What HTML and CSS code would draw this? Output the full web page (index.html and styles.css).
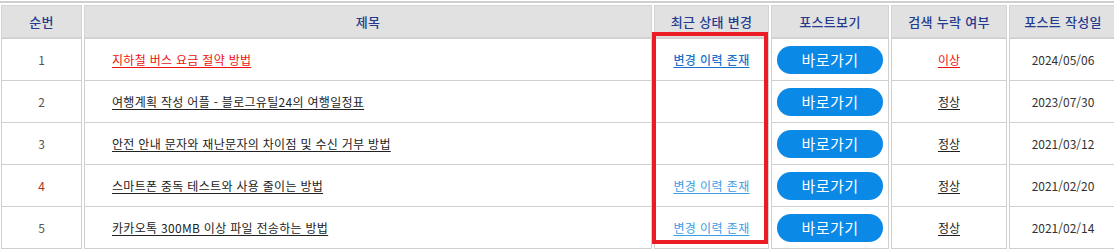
FILE: index.html
```html
<!DOCTYPE html>
<html lang="ko">
<head>
<meta charset="utf-8">
<link rel="stylesheet" href="styles.css">
</head>
<body>
<div class="wrap">
  <table class="posts">
    <colgroup>
      <col class="c-no"><col class="c-title"><col class="c-change"><col class="c-view"><col class="c-search"><col class="c-date">
    </colgroup>
    <thead>
      <tr>
        <th>순번</th><th>제목</th><th>최근 상태 변경</th><th>포스트보기</th><th>검색 누락 여부</th><th>포스트 작성일</th>
      </tr>
    </thead>
    <tbody>
      <tr>
        <td class="no">1</td>
        <td class="title"><a class="red">지하철 버스 요금 절약 방법</a></td>
        <td><a class="hist strong">변경 이력 존재</a></td>
        <td><span class="btn">바로가기</span></td>
        <td><a class="red">이상</a></td>
        <td class="date">2024/05/06</td>
      </tr>
      <tr>
        <td class="no">2</td>
        <td class="title"><a>여행계획 작성 어플 - 블로그유틸24의 여행일정표</a></td>
        <td></td>
        <td><span class="btn">바로가기</span></td>
        <td><a>정상</a></td>
        <td class="date">2023/07/30</td>
      </tr>
      <tr>
        <td class="no">3</td>
        <td class="title"><a>안전 안내 문자와 재난문자의 차이점 및 수신 거부 방법</a></td>
        <td></td>
        <td><span class="btn">바로가기</span></td>
        <td><a>정상</a></td>
        <td class="date">2021/03/12</td>
      </tr>
      <tr>
        <td class="no hl">4</td>
        <td class="title"><a>스마트폰 중독 테스트와 사용 줄이는 방법</a></td>
        <td><a class="hist">변경 이력 존재</a></td>
        <td><span class="btn">바로가기</span></td>
        <td><a>정상</a></td>
        <td class="date">2021/02/20</td>
      </tr>
      <tr>
        <td class="no">5</td>
        <td class="title"><a>카카오톡 300MB 이상 파일 전송하는 방법</a></td>
        <td><a class="hist">변경 이력 존재</a></td>
        <td><span class="btn">바로가기</span></td>
        <td><a>정상</a></td>
        <td class="date">2021/02/14</td>
      </tr>
    </tbody>
  </table>
  <div class="mark"></div>
</div>
</body>
</html>
```

FILE: styles.css
```css
html, body {
  margin: 0;
  padding: 0;
  background: #fff;
}
body {
  font-family: "Noto Sans CJK KR", "Noto Sans", sans-serif;
  font-size: 12px;
  color: #333;
}
.wrap {
  position: relative;
  padding-top: 1px;
  width: 1114px;
  overflow: hidden;
}
.posts {
  table-layout: fixed;
  width: 1118px;
  margin-left: -1px;
  border-collapse: separate;
  border-spacing: 2px 0;
  border-top: 2px solid #cfcfcf;
  padding-top: 2px;
}
.c-no { width: 81px; }
.c-title { width: 568px; }
.c-change { width: 115px; }
.c-view { width: 118px; }
.c-search { width: 116px; }
.c-date { width: 108px; }

.posts th, .posts td {
  box-sizing: border-box;
  border: 1px solid #cfcfcf;
  padding: 0;
  text-align: center;
  vertical-align: middle;
}
.posts th {
  height: 33px;
  background: #e1e1e1;
  color: #243b8e;
  font-size: 13px;
  font-weight: 500;
  letter-spacing: 0.3px;
  border-color: #d4d4d4;
}
.posts td {
  height: 42px;
  background: #fff;
  border-top: 0;
}
.posts tbody tr:first-child td {
  border-top: 1px solid #cfcfcf;
  height: 43px;
}
.posts td.no {
  color: #555;
}
.posts td.no.hl {
  color: #a43a2a;
}
.posts td.title {
  text-align: left;
  padding-left: 27px;
  letter-spacing: 0.3px;
}
.posts a {
  color: #222;
  text-decoration: underline;
  text-underline-offset: 2px;
}
.posts a.red {
  color: #f01010;
}
.posts a.hist {
  color: #3c9de6;
  letter-spacing: 0.4px;
}
.posts a.hist.strong {
  color: #1a72cc;
  font-weight: 500;
}
.btn {
  display: inline-flex;
  align-items: center;
  justify-content: center;
  width: 106px;
  height: 28px;
  border-radius: 14px;
  background: #0a89e6;
  color: #fff;
  font-size: 15px;
  letter-spacing: 0.5px;
}
.posts td.date {
  color: #333;
}
.mark {
  position: absolute;
  left: 652px;
  top: 32px;
  width: 116px;
  height: 212px;
  box-sizing: border-box;
  border: 4px solid #ec1c24;
  pointer-events: none;
}
```
